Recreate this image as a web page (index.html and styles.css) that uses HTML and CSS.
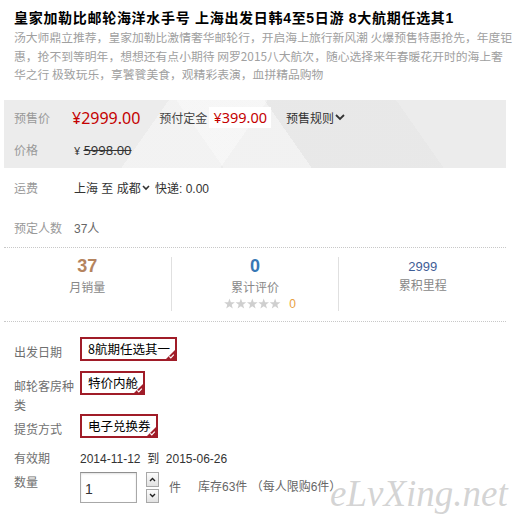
FILE: index.html
```html
<!DOCTYPE html>
<html lang="zh-CN">
<head>
<meta charset="utf-8">
<title>皇家加勒比邮轮海洋水手号</title>
<link rel="stylesheet" href="styles.css">
</head>
<body>
<div class="page">
  <h1 class="title">皇家加勒比邮轮海洋水手号 上海出发日韩4至5日游 8大航期任选其1</h1>
  <p class="subtitle">汤大师鼎立推荐，皇家加勒比激情奢华邮轮行，开启海上旅行新风潮 火爆预售特惠抢先，年度钜<br>惠，抢不到等明年，想想还有点小期待 网罗2015八大航次，随心选择来年春暖花开时的海上奢<br>华之行 极致玩乐，享饕餮美食，观精彩表演，血拼精品购物</p>

  <div class="price-box">
    <div class="price-row">
      <span class="label">预售价</span>
      <span class="price">¥2999.00</span>
      <span class="deposit-label">预付定金</span>
      <span class="deposit">¥399.00</span>
      <span class="rules">预售规则<svg class="chev" width="10" height="7" viewBox="0 0 10 7"><polyline points="1,1 5,5 9,1" fill="none" stroke="#333" stroke-width="1.8"/></svg></span>
    </div>
    <div class="price-row">
      <span class="label">价格</span>
      <span class="orig"><span class="yen">¥</span> <del>5998.00</del></span>
    </div>
  </div>

  <div class="info-row">
    <span class="label">运费</span>
    <span class="value">上海 至 成都<svg class="chev small" width="8" height="6" viewBox="0 0 8 6"><polyline points="1,1 4,4 7,1" fill="none" stroke="#333" stroke-width="1.6"/></svg> 快递: 0.00</span>
  </div>
  <div class="info-row">
    <span class="label">预定人数</span>
    <span class="value muted">37人</span>
  </div>

  <div class="stats">
    <div class="stat">
      <div class="num sold">37</div>
      <div class="stat-label">月销量</div>
    </div>
    <div class="stat">
      <div class="num reviews">0</div>
      <div class="stat-label">累计评价</div>
      <div class="stars">
        <svg width="57" height="11" viewBox="0 0 57 11">
          <g fill="#cfcfcf">
            <polygon points="5.5,0.4 6.85,4.14 10.83,4.27 7.69,6.71 8.79,10.53 5.5,8.3 2.21,10.53 3.31,6.71 0.17,4.27 4.15,4.14"/>
            <polygon transform="translate(11.4 0)" points="5.5,0.4 6.85,4.14 10.83,4.27 7.69,6.71 8.79,10.53 5.5,8.3 2.21,10.53 3.31,6.71 0.17,4.27 4.15,4.14"/>
            <polygon transform="translate(22.8 0)" points="5.5,0.4 6.85,4.14 10.83,4.27 7.69,6.71 8.79,10.53 5.5,8.3 2.21,10.53 3.31,6.71 0.17,4.27 4.15,4.14"/>
            <polygon transform="translate(34.2 0)" points="5.5,0.4 6.85,4.14 10.83,4.27 7.69,6.71 8.79,10.53 5.5,8.3 2.21,10.53 3.31,6.71 0.17,4.27 4.15,4.14"/>
            <polygon transform="translate(45.6 0)" points="5.5,0.4 6.85,4.14 10.83,4.27 7.69,6.71 8.79,10.53 5.5,8.3 2.21,10.53 3.31,6.71 0.17,4.27 4.15,4.14"/>
          </g>
        </svg>
        <span class="star-count">0</span>
      </div>
    </div>
    <div class="stat">
      <div class="num miles">2999</div>
      <div class="stat-label">累积里程</div>
    </div>
  </div>

  <div class="options">
    <div class="opt-row">
      <span class="opt-label">出发日期</span>
      <span class="opt-box">8航期任选其一<svg class="tick" width="9" height="9" viewBox="0 0 9 9"><polygon points="9,0 9,9 0,9" fill="#a01c28"/><polyline points="3.3,6.3 4.8,7.8 7.8,4.6" fill="none" stroke="#fff" stroke-width="1.2"/></svg></span>
    </div>
    <div class="opt-row wrapped">
      <span class="opt-label">邮轮客房种类</span>
      <span class="opt-box">特价内舱<svg class="tick" width="9" height="9" viewBox="0 0 9 9"><polygon points="9,0 9,9 0,9" fill="#a01c28"/><polyline points="3.3,6.3 4.8,7.8 7.8,4.6" fill="none" stroke="#fff" stroke-width="1.2"/></svg></span>
    </div>
    <div class="opt-row">
      <span class="opt-label">提货方式</span>
      <span class="opt-box">电子兑换券<svg class="tick" width="9" height="9" viewBox="0 0 9 9"><polygon points="9,0 9,9 0,9" fill="#a01c28"/><polyline points="3.3,6.3 4.8,7.8 7.8,4.6" fill="none" stroke="#fff" stroke-width="1.2"/></svg></span>
    </div>
  </div>

  <div class="meta-row validity">
    <span class="opt-label">有效期</span>
    <span class="meta-value">2014-11-12 &nbsp;到 &nbsp;2015-06-26</span>
  </div>
  <div class="meta-row qty">
    <span class="opt-label">数量</span>
    <input class="qty-input" type="text" value="1">
    <span class="spinner">
      <span class="spin-btn"><svg width="7" height="5" viewBox="0 0 7 5"><polyline points="1,4 3.5,1.5 6,4" fill="none" stroke="#222" stroke-width="1.4"/></svg></span>
      <span class="spin-btn"><svg width="7" height="5" viewBox="0 0 7 5"><polyline points="1,1 3.5,3.5 6,1" fill="none" stroke="#222" stroke-width="1.4"/></svg></span>
    </span>
    <span class="unit">件</span>
    <span class="stock">库存63件 （每人限购6件）</span>
  </div>

  <div class="watermark">eLvXing.net</div>
</div>
</body>
</html>
```

FILE: styles.css
```css
* { box-sizing: border-box; }

body {
  margin: 0;
  background: #fff;
  font-family: "Liberation Sans", "Noto Sans CJK SC", sans-serif;
  font-size: 12px;
  color: #333;
}

.page {
  position: relative;
  width: 502px;
  margin-left: 4px;
  height: 530px;
}

.title {
  margin: 0;
  padding: 8px 0 0 10px;
  font-size: 14px;
  line-height: 20px;
  font-weight: bold;
  letter-spacing: 0.7px;
  color: #000;
  white-space: nowrap;
}

.subtitle {
  margin: 0;
  padding-left: 10px;
  font-family: "Noto Sans CJK SC", sans-serif;
  font-size: 11.8px;
  line-height: 18.5px;
  color: #a0a0a0;
  white-space: nowrap;
}

.price-box {
  margin-top: 16px;
  padding: 2px 0;
  background-color: #ececec;
  background-image:
    linear-gradient(125deg, rgba(255,255,255,0) 0 30%, rgba(255,255,255,.35) 30% 48%, rgba(255,255,255,0) 48%),
    linear-gradient(55deg, rgba(255,255,255,0) 0 40%, rgba(255,255,255,.3) 40% 56%, rgba(0,0,0,.015) 56% 80%, rgba(255,255,255,0) 80%);
}

.price-row {
  display: flex;
  align-items: center;
  height: 32px;
  padding-left: 10px;
}

.label {
  width: 58px;
  flex: none;
  color: #999;
  font-family: "Noto Sans CJK SC", sans-serif;
  font-size: 12px;
}

.price {
  font-family: "Noto Sans", sans-serif;
  font-size: 16px;
  color: #c40000;
}

.deposit-label {
  margin-left: 19px;
  color: #444;
  font-family: "Noto Sans CJK SC", sans-serif;
}

.deposit {
  margin-left: 2px;
  padding: 0 4px;
  height: 21px;
  line-height: 21px;
  background: #fff;
  font-family: "Noto Sans", sans-serif;
  font-size: 14.5px;
  color: #c40000;
}

.rules {
  margin-left: 15px;
  display: inline-flex;
  align-items: center;
  color: #333;
  font-family: "Noto Sans CJK SC", sans-serif;
}

.chev { margin-left: 1px; }
.chev.small { margin: 0 2px 0 1px; }

.orig {
  margin-left: 2px;
  color: #333;
  font-family: "Noto Sans", sans-serif;
}

.yen { font-size: 11px; }

.orig del {
  font-size: 13px;
  text-decoration-thickness: 1px;
}

.info-row {
  display: flex;
  align-items: center;
  height: 40px;
  padding-left: 10px;
}

.info-row:first-of-type { margin-top: 4px; }

.info-row + .info-row {
  border-bottom: 1px dotted #c8c8c8;
}

.value {
  margin-left: 2px;
  display: inline-flex;
  align-items: center;
  color: #333;
  white-space: pre;
}

.value.muted { color: #666; }

.stats {
  display: flex;
  padding: 9px 0 10px;
  border-bottom: 1px dotted #c8c8c8;
}

.stat {
  flex: 1;
  height: 54px;
  display: flex;
  flex-direction: column;
  align-items: center;
}

.stat + .stat { border-left: 1px solid #e0e0e0; }

.num {
  font-weight: bold;
  font-size: 18px;
  line-height: 19px;
}

.num.sold { color: #b5845e; }
.num.reviews { color: #3778b5; }
.num.miles {
  font-weight: normal;
  font-size: 13px;
  color: #3f5d96;
}

.stat-label {
  margin-top: 1px;
  line-height: 20px;
  color: #888;
  font-family: "Noto Sans CJK SC", sans-serif;
}

.stat:last-child .stat-label { margin-top: -1px; }

.stars {
  display: flex;
  align-items: center;
  margin-left: 10px;
}

.star-count {
  margin-left: 8px;
  color: #e8a040;
}

.options { padding-top: 15px; }

.opt-row {
  display: flex;
  align-items: flex-start;
  padding-left: 10px;
  margin-bottom: 10px;
}

.opt-row.wrapped { margin-bottom: 0; }

.opt-label {
  width: 66px;
  flex: none;
  padding-top: 5px;
  line-height: 19px;
  color: #6f6f6f;
  font-family: "Noto Sans CJK SC", sans-serif;
}

.opt-box {
  position: relative;
  display: inline-block;
  border: 2px solid #a01c28;
  padding: 0 5px 0 6px;
  line-height: 20px;
  font-family: "Noto Sans CJK SC", sans-serif;
  font-size: 12.5px;
  color: #000;
}

.tick {
  position: absolute;
  right: 0;
  bottom: 0;
  display: block;
}

.meta-row {
  display: flex;
  align-items: center;
  padding-left: 10px;
}

.meta-row .opt-label { padding-top: 0; line-height: 20px; }

.validity { margin-top: 7px; }

.meta-value {
  color: #333;
  white-space: pre;
}

.qty {
  margin-top: 4px;
  align-items: flex-start;
}

.qty-input {
  width: 57px;
  height: 31px;
  margin: 0;
  padding: 4px 0 0 4px;
  border: 1px solid #a8a8a8;
  border-top-color: #8f8f8f;
  box-shadow: inset 0 1px 2px rgba(0,0,0,.12);
  font-family: "Liberation Sans", sans-serif;
  font-size: 14px;
  color: #333;
  outline: none;
}

.spinner {
  margin-left: 9px;
  display: flex;
  flex-direction: column;
  gap: 2px;
}

.spin-btn {
  width: 13px;
  height: 15px;
  display: flex;
  align-items: center;
  justify-content: center;
  border: 1px solid #a8a8a8;
  background: linear-gradient(#fcfcfc, #e2e2e2);
}

.spin-btn + .spin-btn { height: 14px; }

.unit {
  margin: 5px 0 0 10px;
  line-height: 20px;
  color: #666;
  font-family: "Noto Sans CJK SC", sans-serif;
}

.stock {
  margin: 5px 0 0 17px;
  line-height: 20px;
  color: #666;
}

.watermark {
  position: absolute;
  left: 326px;
  top: 472px;
  font-family: "Liberation Serif", serif;
  font-style: italic;
  font-size: 37px;
  color: rgba(175,175,175,.55);
  pointer-events: none;
  white-space: nowrap;
}
```
